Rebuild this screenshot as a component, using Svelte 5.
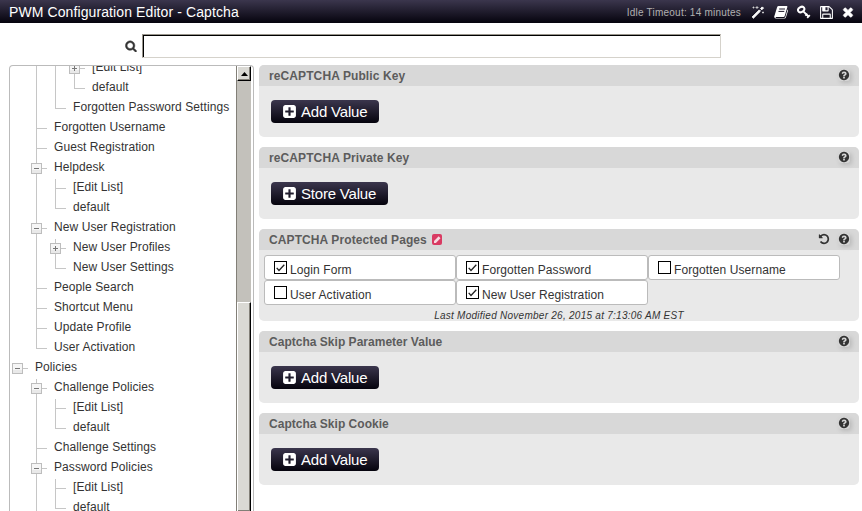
<script>
  const paths = {
    search: 'M1216 832q0-185-131.500-316.500t-316.500-131.500-316.500 131.500-131.500 316.500 131.500 316.500 316.500 131.500 316.500-131.500 131.500-316.500zm512 832q0 52-38 90t-90 38q-54 0-90-38l-343-342q-179 124-399 124-143 0-273.500-55.500t-225-150-150-225-55.500-273.500 55.500-273.500 150-225 225-150 273.500-55.500 273.500 55.500 225 150 150 225 55.500 273.500q0 220-124 399l343 343q37 37 37 90z',
    close: 'M1490 1322q0 40-28 68l-136 136q-28 28-68 28t-68-28l-294-294-294 294q-28 28-68 28t-68-28l-136-136q-28-28-28-68t28-68l294-294-294-294q-28-28-28-68t28-68l136-136q28-28 68-28t68 28l294 294 294-294q28-28 68-28t68 28l136 136q28 28 28 68t-28 68l-294 294 294 294q28 28 28 68z',
    help: 'M1024 1376v-192q0-14-9-23t-23-9h-192q-14 0-23 9t-9 23v192q0 14 9 23t23 9h192q14 0 23-9t9-23zm256-672q0-88-55.500-163t-138.500-116-170-41q-243 0-371 213-15 24 8 42l132 100q7 6 19 6 16 0 25-12 53-68 86-92 34-24 86-24 48 0 85.500 26t37.500 59q0 38-20 61t-68 45q-63 28-115.500 86.500t-52.500 125.500v36q0 14 9 23t23 9h192q14 0 23-9t9-23q0-19 21.500-49.500t54.500-49.500q32-18 49-28.500t46-35 44.500-48 28-60.500 12.500-81zm384 192q0 209-103 385.500t-279.500 279.500-385.500 103-385.500-103-279.500-279.500-103-385.500 103-385.500 279.500-279.500 385.500-103 385.500 103 279.500 279.500 103 385.500z',
    plus: 'M1408 960v-128q0-26-19-45t-45-19h-320v-320q0-26-19-45t-45-19h-128q-26 0-45 19t-19 45v320h-320q-26 0-45 19t-19 45v128q0 26 19 45t45 19h320v320q0 26 19 45t45 19h128q26 0 45-19t19-45v-320h320q26 0 45-19t19-45zm256-544v960q0 119-84.500 203.500t-203.500 84.500h-960q-119 0-203.500-84.500t-84.500-203.500v-960q0-119 84.500-203.500t203.500-84.500h960q119 0 203.500 84.500t84.500 203.500z',
    undo: 'M1664 896q0 156-61 298t-164 245-245 164-298 61q-172 0-327-72.500t-264-204.500q-7-10-6.500-22.500t8.500-20.500l137-138q10-9 25-9 16 2 23 12 73 95 179 147t225 52q104 0 198.500-40.500t163.500-109.500 109.500-163.500 40.500-198.500-40.500-198.500-109.500-163.500-163.500-109.500-198.500-40.500q-98 0-188 35.500t-160 101.500l137 138q31 30 14 69-17 40-59 40h-448q-26 0-45-19t-19-45v-448q0-42 40-59 39-17 69 14l130 129q107-101 244.500-156.500t284.500-55.500q156 0 298 61t245 164 164 245 61 298z',
    save: 'M512 1536h768v-384h-768v384zm896 0h128v-896q0-14-10-38.500t-20-34.500l-281-281q-10-10-34-20t-39-10v416q0 40-28 68t-68 28h-576q-40 0-68-28t-28-68v-416h-128v1280h128v-416q0-40 28-68t68-28h832q40 0 68 28t28 68v416zm-384-928v-320q0-13-9.500-22.500t-22.500-9.500h-192q-13 0-22.500 9.500t-9.500 22.500v320q0 13 9.500 22.500t22.500 9.500h192q13 0 22.500-9.500t9.500-22.500zm640 32v928q0 40-28 68t-68 28h-1344q-40 0-68-28t-28-68v-1344q0-40 28-68t68-28h928q40 0 88 20t76 48l280 280q28 28 48 76t20 88z'
  };

  // One guide character per level: | through, T branch, L last branch,
  // + and - expanders on a trunk, s an open expander without a trunk.
  const tree = [
    [' ||+', '[Edit List]'],
    [' ||L', 'default'],
    [' |L', 'Forgotten Password Settings'],
    [' T', 'Forgotten Username'],
    [' T', 'Guest Registration'],
    [' -', 'Helpdesk'],
    [' |T', '[Edit List]'],
    [' |L', 'default'],
    [' -', 'New User Registration'],
    [' |+', 'New User Profiles'],
    [' |L', 'New User Settings'],
    [' T', 'People Search'],
    [' T', 'Shortcut Menu'],
    [' T', 'Update Profile'],
    [' L', 'User Activation'],
    ['s', 'Policies'],
    [' -', 'Challenge Policies'],
    [' |T', '[Edit List]'],
    [' |L', 'default'],
    [' T', 'Challenge Settings'],
    [' -', 'Password Policies'],
    [' |T', '[Edit List]'],
    [' |L', 'default']
  ];

  const pages = [
    ['Login Form', true],
    ['Forgotten Password', true],
    ['Forgotten Username', false],
    ['User Activation', false],
    ['New User Registration', true]
  ];

  const settings = [
    { title: 'reCAPTCHA Public Key', button: 'Add Value' },
    { title: 'reCAPTCHA Private Key', button: 'Store Value' },
    { title: 'CAPTCHA Protected Pages', pages, modified: 'Last Modified November 26, 2015 at 7:13:06 AM EST' },
    { title: 'Captcha Skip Parameter Value', button: 'Add Value', tight: true },
    { title: 'Captcha Skip Cookie', button: 'Add Value', tight: true }
  ];
</script>

{#snippet icon(name, size)}
  <svg class="icon {name}" width={size} height={size} viewBox="0 0 1792 1792"><path d={paths[name]} fill="currentColor" /></svg>
{/snippet}

{#snippet guide(kind)}
  <svg class="guide" width="19" height="20" viewBox="0 0 19 20" shape-rendering="crispEdges">
    {#if kind !== ' '}
      {#if kind !== 's'}
        <rect x="0" y="0" width="1" height={kind === 'L' ? 10 : 20} fill="#c6c6c6" />
      {/if}
      {#if kind !== '|'}
        <rect x="0" y="9" width="11" height="1" fill="#c6c6c6" />
      {/if}
      {#if '+-s'.includes(kind)}
        <rect x="-5" y="4" width="11" height="11" fill="#bdbdbd" />
        <rect x="-4" y="5" width="9" height="9" fill="#f6f6f6" />
        <rect x="-4" y="11" width="9" height="3" fill="#e9e9e9" />
        <rect x="-2" y="9" width="5" height="1" fill="#777" />
        {#if kind === '+'}<rect x="0" y="7" width="1" height="5" fill="#777" />{/if}
      {/if}
    {/if}
  </svg>
{/snippet}

<div class="app">
  <header>
    <h1>PWM Configuration Editor - Captcha</h1>
    <span class="idle">Idle Timeout: 14 minutes</span>
    <nav>
      <svg width="14" height="14" viewBox="0 0 14 14">
        <path d="M1.200 12 8.300 4.900l1.200 1.200-7.100 7.100z M9.600 3.600l1.700-1.700 1.200 1.200-1.700 1.700z" fill="#fff" stroke="#fff" stroke-width="1" />
        <path d="M2.500 1.500v2M1.500 2.500h2M6 1v3M4.500 2.500h3M12 6.500v2M11 7.500h2" stroke="#ddd" stroke-width=".8" />
      </svg>
      <svg width="14" height="14" viewBox="0 0 14 14">
        <path d="M4.600 1h8.200q.8.300.5 1.200L10.700 11q-.3.900-1.200.9H2.300q-.7 0-.7.500t.8.600h7.500q1 0 1.400-1l2.300-7.600q.7.500.4 1.400l-2.100 6.800Q11.500 13.500 10.500 13.500H2.300Q.7 13.500 .3 12.300q-.2-.7.100-1.300L3.100 2.200Q3.500 1 4.600 1z" fill="#fff" />
        <path d="M5.200 4h5.800M4.500 6.400h5.800" stroke="#1c182a" stroke-width="1" />
      </svg>
      <svg width="14" height="14" viewBox="0 0 14 14" fill="none" stroke="#fff">
        <ellipse cx="4.200" cy="4.500" rx="3.300" ry="2.500" transform="rotate(-30 4.200 4.500)" stroke-width="2" />
        <path d="M6.300 6.300 12 12M8.300 10.600l2-2M10.200 12.800l2.600-2.600" stroke-width="1.800" />
      </svg>
      {@render icon('save', 15)}
      {@render icon('close', 14)}
    </nav>
  </header>

  <div class="searchbar">
    {@render icon('search', 12)}
    <div class="field"></div>
  </div>

  <main>
    <aside>
      <div class="rows">
        {#each tree as [guides, label]}
          <div class="row">
            {#each guides as kind}{@render guide(kind)}{/each}<span>{label}</span>
          </div>
        {/each}
      </div>
      <div class="scrollbar">
        <div class="up"><svg width="7" height="4" viewBox="0 0 7 4"><path d="M3.500 0 7 4H0z" /></svg></div>
        <div class="track"></div>
        <div class="thumb"></div>
      </div>
    </aside>

    <div class="settings">
      {#each settings as s}
        <section>
          <h2 class:tight={s.tight}>
            <span>{s.title}</span>
            {#if s.pages}
              <svg class="edited" width="10" height="11" viewBox="0 0 10 11">
                <rect width="10" height="11" rx="2" fill="#d93a62" />
                <path d="M2 9V7.100L6.700 2.300l1.800 1.900L3.900 9z" fill="#f7d9e0" />
              </svg>
            {/if}
            <span class="tools">
              {#if s.pages}{@render icon('undo', 12)}{/if}
              <span class="hint">{@render icon('help', 12)}</span>
            </span>
          </h2>
          <div class="body" class:list={s.pages}>
            {#if s.pages}
              <div class="options">
                {#each s.pages as [name, checked]}
                  <div class="option">
                    <span class="box">
                      {#if checked}
                        <svg width="9" height="8" viewBox="0 0 9 8"><path d="M.7 3.800 3 6.500 8.300.8" fill="none" stroke="#222" stroke-width="1.300" /></svg>
                      {/if}
                    </span>
                    <span class="name">{name}</span>
                  </div>
                {/each}
              </div>
              <p>{s.modified}</p>
            {:else}
              <button>{@render icon('plus', 15)}<span>{s.button}</span></button>
            {/if}
          </div>
        </section>
      {/each}
    </div>
  </main>
</div>

<style>
  :global(body) { margin: 0; background: #fff; }
  .app {
    width: 862px; height: 511px; overflow: hidden; display: flex; flex-direction: column;
    font-family: "Liberation Sans", Arial, sans-serif; font-size: 12px; color: #333;
  }
  svg { display: block; flex: none; }
  header {
    height: 23px; flex: none; display: flex; align-items: center; padding: 0 7px 0 9px;
    background: linear-gradient(#3b364d, #05030d); color: #fff;
  }
  h1 { margin: 0; font-size: 14px; line-height: 22px; font-weight: 400; flex: 1; letter-spacing: .1px; }
  .idle { font-size: 10px; color: #b0b0b0; line-height: 16px; margin: 2px 10px 0 0; letter-spacing: .22px; }
  nav { display: flex; align-items: center; gap: 9px; padding-top: 1px; }
  .save { margin: 0 -2px 0 -1px; }
  .close path { stroke: currentColor; stroke-width: 90px; }
  .searchbar { height: 42px; flex: none; display: flex; padding-left: 125px; box-sizing: border-box; }
  .search { margin-top: 17px; }
  .search path { stroke: currentColor; stroke-width: 70px; }
  .field {
    box-sizing: border-box; width: 579px; height: 24px; margin: 11px 0 0 5px;
    border: 1px solid; border-color: #99958c #d5d2cb #d5d2cb #99958c;
    box-shadow: inset 1px 1px #000;
  }
  main { display: flex; flex: 1; min-height: 0; padding-left: 9px; }
  aside {
    width: 245px; box-sizing: border-box; display: flex; overflow: hidden;
    border: 1px solid #bbb; border-bottom: 0; border-radius: 4px 4px 0 0;
  }
  .rows { width: 226px; margin-top: -7px; padding-left: 7px; box-sizing: border-box; }
  .row { display: flex; height: 20px; white-space: nowrap; }
  .row span { line-height: 16px; margin-left: -1px; letter-spacing: .08px; }
  .guide { overflow: visible; }
  .scrollbar {
    width: 15px; height: 446px; box-sizing: border-box; display: flex; flex-direction: column;
    background: #c3c1bb; border-left: 1px solid #827f77;
  }
  .up, .thumb {
    box-sizing: border-box; background: #dad9d4; border: 1px solid;
    border-color: #fff #000 #000 #fff; box-shadow: inset -1px -1px #827f77;
  }
  .up { height: 15px; display: flex; justify-content: center; padding-top: 5px; }
  .track { height: 221px; }
  .thumb { flex: 1; }
  .settings { margin-left: 5px; width: 600px; display: flex; flex-direction: column; gap: 10px; }
  section { background: #e9e9e9; border-radius: 5px; overflow: hidden; flex: none; }
  h2 {
    margin: 0; height: 21px; display: flex; align-items: center; padding: 0 9px 0 10px;
    background: #d8d8d8; color: #5c5c5c; font-size: 12px; font-weight: 700; letter-spacing: .1px;
  }
  h2.tight { letter-spacing: .02px; }
  .edited { margin-left: 5px; }
  .tools { margin-left: auto; display: flex; gap: 8px; color: #333; margin-top: -1px; }
  .hint { border-radius: 3px; box-shadow: 2px 2px 4px #bbb; background: #d5d5d5; }
  .body { height: 51px; padding: 14px 12px; box-sizing: border-box; }
  .body.list { height: 71px; padding: 5px 5px 0; }
  button {
    height: 23px; display: flex; align-items: center; padding: 0 12px 0 11px; border: 0; border-radius: 4px;
    background: linear-gradient(#3b364d, #05030d); color: #fff; font: 15px "Liberation Sans", Arial, sans-serif;
  }
  button span { margin-left: 4px; letter-spacing: -.2px; }
  .options { display: flex; flex-wrap: wrap; }
  .option {
    width: 192px; height: 25px; box-sizing: border-box; display: flex; padding: 5px 0 0 9px;
    border: 1px solid #bbb; border-radius: 3px; background: #fff;
  }
  .box {
    width: 13px; height: 13px; box-sizing: border-box; border: 1px solid #000;
    display: flex; align-items: center; justify-content: center;
  }
  .name { margin: 2px 0 0 3px; line-height: 15px; letter-spacing: .1px; }
  p { margin: 4px 0 0; text-align: center; font-size: 10px; line-height: 14px; font-style: italic; letter-spacing: .26px; }
</style>
